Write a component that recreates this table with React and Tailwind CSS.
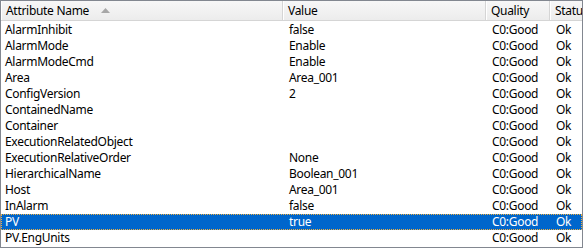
import React from "react";

const rows = [
  ["AlarmInhibit", "false"],
  ["AlarmMode", "Enable"],
  ["AlarmModeCmd", "Enable"],
  ["Area", "Area_001"],
  ["ConfigVersion", "2"],
  ["ContainedName", ""],
  ["Container", ""],
  ["ExecutionRelatedObject", ""],
  ["ExecutionRelativeOrder", "None"],
  ["HierarchicalName", "Boolean_001"],
  ["Host", "Area_001"],
  ["InAlarm", "false"],
  ["PV", "true"],
  ["PV.EngUnits", ""],
];

function SortArrow() {
  return (
    <svg width="9" height="5" viewBox="0 0 9 5" className="ml-[12px] mt-[-1px]">
      <polygon points="0,5 4.5,0 9,5" fill="#a7a7a7" />
    </svg>
  );
}

function HeaderCell({ className, children }) {
  return (
    <div
      className={`flex items-center h-full pl-[5px] border-r border-[#d5d5d5] shadow-[inset_1px_0_0_#ffffff] whitespace-nowrap overflow-hidden ${className}`}
    >
      {children}
    </div>
  );
}

export default function App() {
  return (
    <div
      className="w-[583px] h-[248px] bg-white border border-[#828790] overflow-hidden text-[12px] tracking-[-0.3px] text-black"
      style={{ fontFamily: '"Noto Sans", "Open Sans", Arial, sans-serif' }}
    >
      <div className="flex h-[20px] bg-gradient-to-b from-[#f7f7f7] to-[#ececec] border-b border-[#d5d5d5]">
        <HeaderCell className="w-[282px]">
          <span>Attribute Name</span>
          <SortArrow />
        </HeaderCell>
        <HeaderCell className="w-[203px]">Value</HeaderCell>
        <HeaderCell className="w-[64px]">Quality</HeaderCell>
        <HeaderCell className="flex-1 border-r-0">Status</HeaderCell>
      </div>
      <div className="pt-[1px]">
        {rows.map(([name, value]) => {
          const selected = name === "PV";
          return (
            <div
              key={name}
              className={`flex h-[16px] items-center leading-[16px] whitespace-nowrap ${
                selected
                  ? "bg-[#0066cc] text-white outline outline-1 outline-dotted outline-offset-[-1px] outline-[#f0b040]"
                  : ""
              }`}
            >
              <div className="w-[282px] pl-[4px]">{name}</div>
              <div className="w-[203px] pl-[6px]">{value}</div>
              <div className="w-[64px] pl-[6px]">C0:Good</div>
              <div className="flex-1 pl-[6px]">Ok</div>
            </div>
          );
        })}
      </div>
    </div>
  );
}
